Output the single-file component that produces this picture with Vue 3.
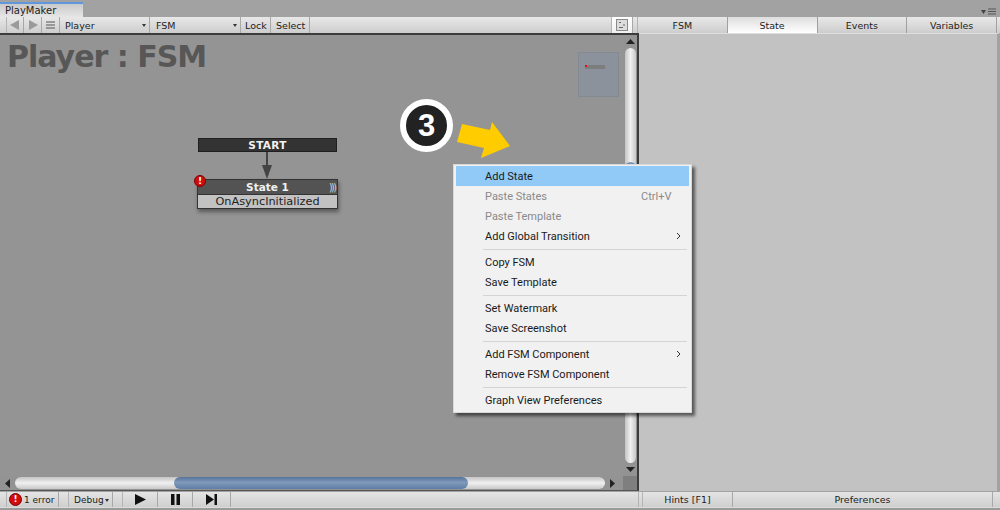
<script setup>
const tools = [
  { label: 'Player', width: 90 },
  { label: 'FSM', width: 90 },
]
const sideTabs = [
  { label: 'FSM', active: false },
  { label: 'State', active: true },
  { label: 'Events', active: false },
  { label: 'Variables', active: false },
]
const menu = [
  { label: 'Add State', active: true },
  { label: 'Paste States', disabled: true, shortcut: 'Ctrl+V' },
  { label: 'Paste Template', disabled: true },
  { label: 'Add Global Transition', sub: true },
  { sep: true },
  { label: 'Copy FSM' },
  { label: 'Save Template' },
  { sep: true },
  { label: 'Set Watermark' },
  { label: 'Save Screenshot' },
  { sep: true },
  { label: 'Add FSM Component', sub: true },
  { label: 'Remove FSM Component' },
  { sep: true },
  { label: 'Graph View Preferences' },
]
</script>

<template>
  <div class="app">
    <div class="tabstrip">
      <div class="tab">PlayMaker</div>
      <svg class="panel-menu" width="18" height="8" viewBox="0 0 18 8">
        <path d="M1 2h5L3.500 6z" fill="#444" />
        <path d="M8 1h8M8 3.500h8M8 6h8" stroke="#555" stroke-width="1.200" />
      </svg>
    </div>

    <div class="toolbar">
      <div class="tool-left">
        <div class="cell nav first">
          <svg width="10" height="10" viewBox="0 0 10 10"><path d="M9 0v10L0 5z" fill="#9a9a9a" /></svg>
        </div>
        <div class="cell nav">
          <svg width="10" height="10" viewBox="0 0 10 10"><path d="M1 0v10l9-5z" fill="#9a9a9a" /></svg>
        </div>
        <div class="cell nav">
          <svg width="9" height="8" viewBox="0 0 9 8"><path d="M0 1h9M0 4h9M0 7h9" stroke="#555" stroke-width="1" /></svg>
        </div>
        <div v-for="tool in tools" :key="tool.label" class="cell drop" :style="{ width: tool.width + 'px' }">
          <span>{{ tool.label }}</span>
          <i class="caret"></i>
        </div>
        <div class="cell lock">Lock</div>
        <div class="cell select">Select</div>
        <div class="spacer"></div>
        <div class="cell mini">
          <svg width="12" height="12" viewBox="0 0 12 12">
            <rect x="0.500" y="0.500" width="11" height="11" fill="#dcdcdc" stroke="#8a8a8a" />
            <path d="M3 3.500h2M7 6h2M3 8.500h4" stroke="#666" stroke-width="1" />
          </svg>
        </div>
      </div>
      <div class="side-tabs">
        <div v-for="tab in sideTabs" :key="tab.label" :class="['side-tab', { active: tab.active }]">{{ tab.label }}</div>
      </div>
    </div>

    <div class="body">
      <div class="graph-wrap">
        <div class="graph-row">
          <div class="canvas">
            <div class="title">Player : FSM</div>
            <div class="minimap"><span class="mini-node"><b></b></span></div>

            <div class="start">START</div>
            <svg class="link" width="14" height="30" viewBox="0 0 14 30">
              <path d="M7 0v16" stroke="#444" stroke-width="2" />
              <path d="M2 13h10L7 27z" fill="#444" />
            </svg>
            <div class="state">
              <div class="state-head">State 1<span class="waves">)))</span></div>
              <div class="state-row">OnAsyncInitialized</div>
            </div>
            <span class="error-dot node-error">!</span>

            <div class="step">3</div>
            <svg class="arrow" width="56" height="37" viewBox="0 0 56 37">
              <path d="M6 2L34 8L36 0L54 24L25 36L28 26L1 20z" fill="#ffcc00" />
            </svg>
          </div>
          <div class="vscroll">
            <svg width="9" height="7" viewBox="0 0 9 7"><path d="M4.500 1L9 6H0z" fill="#222" /></svg>
            <div class="vtrack"><div class="vthumb"></div></div>
            <svg width="9" height="7" viewBox="0 0 9 7"><path d="M0 1h9L4.500 6z" fill="#222" /></svg>
          </div>
        </div>
        <div class="hscroll">
          <svg width="7" height="9" viewBox="0 0 7 9"><path d="M6 0v9L1 4.500z" fill="#222" /></svg>
          <div class="htrack"><div class="hthumb"></div></div>
          <svg width="7" height="9" viewBox="0 0 7 9"><path d="M1 0v9l5-4.500z" fill="#222" /></svg>
          <div class="corner"></div>
        </div>
      </div>
      <div class="inspector"></div>
    </div>

    <div class="status">
      <div class="status-left">
        <div class="cell errors"><span class="error-dot big">!</span>1 error</div>
        <div class="cell debug">Debug<i class="caret"></i></div>
        <div class="cell play first-play">
          <svg width="13" height="11" viewBox="0 0 13 11"><path d="M1 0v11l11-5.500z" fill="#111" /></svg>
        </div>
        <div class="cell play pause">
          <svg width="11" height="11" viewBox="0 0 11 11"><path d="M1 0h3.500v11H1zM6.500 0H10v11H6.500z" fill="#111" /></svg>
        </div>
        <div class="cell play last-play">
          <svg width="13" height="11" viewBox="0 0 13 11"><path d="M1 0v11l8-5.500zM9.500 0H12v11H9.500z" fill="#111" /></svg>
        </div>
      </div>
      <div class="status-right">
        <div class="hints">Hints [F1]</div>
        <div class="prefs">Preferences</div>
      </div>
    </div>
    <div class="foot"></div>

    <div class="menu">
      <template v-for="(item, i) in menu" :key="i">
        <div v-if="item.sep" class="sep"></div>
        <div v-else :class="['item', { active: item.active, disabled: item.disabled }]">
          <span>{{ item.label }}</span>
          <span v-if="item.shortcut" class="shortcut">{{ item.shortcut }}</span>
          <svg v-if="item.sub" class="sub" width="5" height="8" viewBox="0 0 5 8"><path d="M1 1l3 3-3 3" fill="none" stroke="#333" stroke-width="1" /></svg>
        </div>
      </template>
    </div>
  </div>
</template>

<style>
html, body { margin: 0; background: #a2a2a2; }
</style>

<style scoped>
.app {
  position: relative;
  width: 1000px;
  height: 510px;
  overflow: hidden;
  display: flex;
  flex-direction: column;
  background: #a2a2a2;
  font-family: "DejaVu Sans", sans-serif;
  font-size: 9.500px;
  color: #1c1c1c;
}

.tabstrip {
  height: 17px;
  position: relative;
  flex: none;
  display: flex;
  align-items: flex-end;
}
.tab {
  width: 83px;
  height: 15px;
  box-sizing: border-box;
  border-top: 2px solid #5f96dc;
  background: linear-gradient(#c9c9c9, #e6e6e6);
  font-size: 10px;
  line-height: 14px;
  padding-left: 5px;
  color: #222;
}
.panel-menu { position: absolute; right: 2px; top: 8px; }

.toolbar {
  height: 16px;
  flex: none;
  display: flex;
  box-sizing: border-box;
  background: linear-gradient(#e8e8e8, #cdcdcd);
}
.tool-left {
  width: 637px;
  flex: none;
  display: flex;
  padding-left: 6px;
  box-sizing: border-box;
}
.cell {
  box-sizing: border-box;
  display: flex;
  align-items: center;
  flex: none;
  border-right: 1px solid #a8a8a8;
  height: 100%;
  padding-top: 1px;
}
.nav { width: 18px; justify-content: center; padding-top: 0; }
.nav.first { border-left: 1px solid #b4b4b4; }
.drop {
  padding: 1px 3px 0 5px;
  justify-content: space-between;
}
.drop + .drop { margin-left: 1px; }
.caret {
  display: inline-block;
  width: 0;
  height: 0;
  border-left: 2.500px solid transparent;
  border-right: 2.500px solid transparent;
  border-top: 3px solid #333;
}
.lock { width: 29px; padding-left: 3px; margin-left: 1px; }
.select { width: 38px; padding-left: 4px; margin-left: 1px; }
.spacer { flex: 1; }
.mini {
  width: 22px;
  justify-content: center;
  padding-top: 0;
  background: linear-gradient(#fff, #f0f0f0);
  border-left: 1px solid #b4b4b4;
  margin-right: 4px;
}

.side-tabs {
  flex: 1;
  display: flex;
  margin-right: 3px;
  border-left: 1px solid #b4b4b4;
}
.side-tab {
  flex: 1;
  text-align: center;
  line-height: 18px;
  border-right: 1px solid #a0a0a0;
}
.side-tab.active { background: linear-gradient(#dedede, #fff); }

.body {
  flex: 1;
  min-height: 0;
  display: flex;
}
.graph-wrap {
  width: 639px;
  flex: none;
  display: flex;
  flex-direction: column;
  box-sizing: border-box;
  border-right: 2px solid #3c3c3c;
  border-top: 2px solid #3c3c3c;
  border-bottom: 1px solid #555;
}
.graph-row {
  flex: 1;
  min-height: 0;
  display: flex;
}
.canvas {
  flex: 1;
  position: relative;
  background: #949494;
}
.title {
  position: absolute;
  left: 7px;
  top: 4px;
  font: bold 30px "DejaVu Sans", sans-serif;
  letter-spacing: -1px;
  color: #575757;
  white-space: nowrap;
}
.minimap {
  position: absolute;
  left: 578px;
  top: 17px;
  width: 41px;
  height: 45px;
  box-sizing: border-box;
  background: #8c929b;
  border: 1px solid #838a93;
}
.mini-node {
  position: absolute;
  left: 6px;
  top: 12px;
  width: 20px;
  height: 4px;
  background: #7d7d7d;
}
.mini-node b {
  position: absolute;
  left: 0;
  top: 0;
  width: 2px;
  height: 2px;
  background: #e01010;
}
.start {
  position: absolute;
  left: 198px;
  top: 103px;
  width: 139px;
  height: 14px;
  box-sizing: border-box;
  background: #333;
  border: 1px solid #1f1f1f;
  color: #f2f2f2;
  font-weight: bold;
  font-size: 10.500px;
  letter-spacing: 0.300px;
  line-height: 12px;
  text-align: center;
}
.link { position: absolute; left: 260px; top: 117px; }
.state {
  position: absolute;
  left: 197px;
  top: 144px;
  width: 141px;
  box-shadow: 1px 3px 4px rgba(0, 0, 0, 0.4);
}
.state-head {
  position: relative;
  height: 16px;
  box-sizing: border-box;
  background: #535353;
  border: 1px solid #333;
  color: #f0f0f0;
  font-weight: bold;
  font-size: 10.500px;
  line-height: 14px;
  text-align: center;
}
.waves {
  position: absolute;
  right: 2px;
  top: 0;
  font-weight: normal;
  letter-spacing: -2px;
  color: #ccc;
}
.state-row {
  height: 14px;
  box-sizing: border-box;
  background: #c2c2c2;
  border: 1px solid #333;
  border-top: none;
  font-size: 11.300px;
  line-height: 13px;
  text-align: center;
  color: #222;
}
.error-dot {
  display: inline-block;
  width: 12px;
  height: 12px;
  border-radius: 50%;
  background: #d40b0b;
  border: 1px solid #7a0000;
  box-sizing: border-box;
  color: #fff;
  font-weight: bold;
  font-size: 9px;
  line-height: 10px;
  text-align: center;
  flex: none;
}
.error-dot.big { width: 13px; height: 13px; line-height: 11px; }
.node-error { position: absolute; left: 194px; top: 140px; }

.step {
  position: absolute;
  left: 400px;
  top: 64px;
  width: 53px;
  height: 53px;
  box-sizing: border-box;
  border-radius: 50%;
  background: #222;
  border: 6px solid #fff;
  color: #fff;
  font: bold 31px/41px "Liberation Sans", sans-serif;
  text-align: center;
}
.arrow { position: absolute; left: 456px; top: 87px; }

.vscroll {
  width: 14px;
  flex: none;
  display: flex;
  flex-direction: column;
  align-items: center;
  background: #939393;
  padding: 3px 0;
  box-sizing: border-box;
  gap: 3px;
}
.vtrack {
  position: relative;
  flex: 1;
  width: 11px;
  border-radius: 6px;
  background: linear-gradient(90deg, #c4c4c4, #f0f0f0 50%, #c8c8c8);
}
.vthumb {
  position: absolute;
  left: 0;
  top: 114px;
  width: 11px;
  height: 240px;
  border-radius: 6px;
  background: linear-gradient(90deg, #56739a, #7f99ba 45%, #5f7ea6);
}
.hscroll {
  height: 14px;
  flex: none;
  display: flex;
  align-items: center;
  background: #939393;
  padding-left: 4px;
  gap: 4px;
}
.htrack {
  flex: 1;
  height: 12px;
  border-radius: 6px;
  background: linear-gradient(#c4c4c4, #f0f0f0 50%, #c8c8c8);
  position: relative;
}
.hthumb {
  position: absolute;
  left: 159px;
  top: 0;
  width: 294px;
  height: 12px;
  border-radius: 6px;
  background: linear-gradient(#56739a, #7f99ba 45%, #5f7ea6);
}
.corner { width: 14px; height: 14px; background: #7f7f7f; margin-left: 3px; }

.inspector {
  flex: 1;
  background: #c2c2c2;
  border-right: 3px solid #a2a2a2;
  border-top: 1px solid #dedede;
}

.status {
  height: 15px;
  margin-top: 1px;
  flex: none;
  display: flex;
  font-size: 9px;
  background: linear-gradient(#e4e4e4, #cfcfcf);
}
.status-left {
  width: 639px;
  flex: none;
  display: flex;
  padding-left: 6px;
  box-sizing: border-box;
  border-right: 1px solid #b4b4b4;
}
.errors {
  width: 53px;
  gap: 2px;
  padding-left: 2px;
  padding-top: 0;
  border-left: 1px solid #b4b4b4;
}
.debug {
  width: 45px;
  margin-left: 9px;
  padding: 1px 3px 0 5px;
  justify-content: space-between;
  border-left: 1px solid #b4b4b4;
}
.play { justify-content: center; padding-top: 0; }
.first-play { width: 36px; margin-left: 9px; border-left: 1px solid #b4b4b4; }
.pause { width: 35px; }
.last-play { width: 38px; }
.status-right {
  flex: 1;
  display: flex;
  margin-right: 7px;
  font-size: 9.500px;
}
.hints {
  width: 91px;
  text-align: center;
  line-height: 16px;
  border-right: 1px solid #a8a8a8;
  box-sizing: border-box;
  margin-left: 3px;
  border-left: 1px solid #b4b4b4;
}
.prefs { flex: 1; text-align: center; line-height: 16px; border-right: 1px solid #a8a8a8; }
.foot {
  height: 3px;
  flex: none;
  box-sizing: border-box;
  background: #9a9a9a;
  border-top: 1px solid #dcdcdc;
}

.menu {
  position: absolute;
  left: 453px;
  top: 164px;
  width: 239px;
  height: 249px;
  box-sizing: border-box;
  padding: 1px 2px;
  background: #f1f1f1;
  border: 1px solid #d8d8d8;
  box-shadow: 3px 3px 3px rgba(0, 0, 0, 0.55);
  font-family: Roboto, sans-serif;
  font-size: 11px;
  color: #1a1a1a;
}
.item {
  position: relative;
  height: 20px;
  line-height: 22px;
  padding-left: 29px;
  display: flex;
}
.item.active { background: #91c9f7; }
.item.disabled { color: #8a8a8a; }
.shortcut { position: absolute; left: 185px; }
.sub { position: absolute; right: 8px; top: 6px; }
.sep {
  height: 1px;
  margin: 3px 2px 2px 27px;
  background: #d4d4d4;
}
</style>
